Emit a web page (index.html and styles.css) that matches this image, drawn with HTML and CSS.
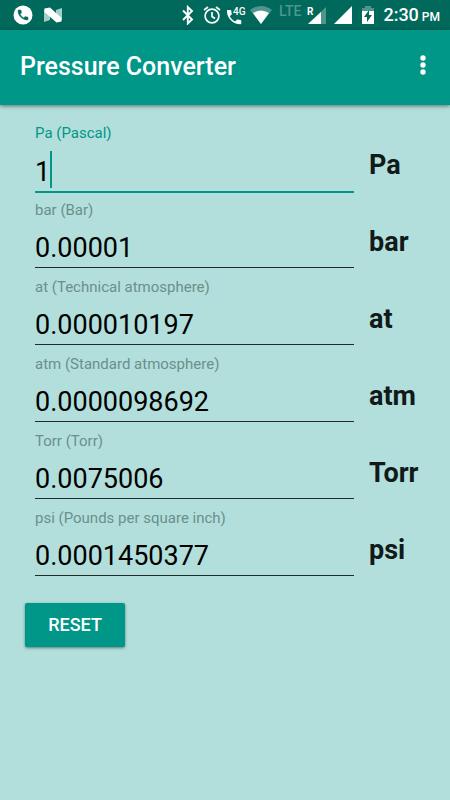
FILE: index.html
```html
<!DOCTYPE html>
<html lang="en">
<head>
<meta charset="utf-8">
<meta name="viewport" content="width=device-width, initial-scale=1">
<title>Pressure Converter</title>
<link rel="stylesheet" href="styles.css">
</head>
<body>
<div class="status">
  <div class="status-left">
    <svg width="20" height="20" viewBox="0 0 20 20" aria-hidden="true"><circle cx="10" cy="10" r="9.5" fill="#fff"/><path transform="translate(3.4 3.4) scale(.55)" fill="#00695c" d="M6.6 10.8c1.4 2.8 3.8 5.1 6.6 6.6l2.2-2.2c.3-.3.7-.4 1-.2 1.1.4 2.3.6 3.6.6.6 0 1 .4 1 1V20c0 .6-.4 1-1 1C10.6 21 3 13.4 3 4c0-.6.4-1 1-1h3.500c.6 0 1 .4 1 1 0 1.300.2 2.500.6 3.600.1.4 0 .8-.2 1z" stroke="#00695c" stroke-width="1"/></svg>
    <svg width="20" height="16" viewBox="0 0 20 16" aria-hidden="true"><path d="M1 2v13l6-2V4zM19 1v12l-6-2V3z" fill="#a3cdc8"/><path d="M1.500 1.500 7 .5 18.500 11v3.500l-5 1L1.500 5z" fill="#fff"/></svg>
  </div>
  <div class="status-right">
    <svg class="bt" width="12" height="20" viewBox="0 0 12 20" fill="none" stroke="#fff" stroke-width="1.9" aria-hidden="true"><path d="M1 5.500l9 9-4.200 4V2L10 6l-9 9"/></svg>
    <svg class="alarm" width="18" height="18" viewBox="0 0 18 18" fill="none" stroke="#fff" stroke-width="1.700" aria-hidden="true"><circle cx="9" cy="10" r="6.900"/><path d="M9 6v4.500l3 2M1 4l4-3M17 4l-4-3"/></svg>
    <svg class="call" width="20" height="20" viewBox="0 0 20 20" aria-hidden="true"><path transform="translate(-1.500 2.500) scale(.8)" fill="#fff" d="M6.600 10.800c1.400 2.800 3.800 5.100 6.600 6.600l2.200-2.200c.3-.3.7-.4 1-.2 1.100.4 2.300.6 3.600.6.6 0 1 .4 1 1V20c0 .6-.4 1-1 1C10.600 21 3 13.400 3 4c0-.6.4-1 1-1h3.500c.6 0 1 .4 1 1 0 1.300.2 2.500.6 3.600.1.4 0 .8-.2 1z"/><text class="tag" x="7" y="10">4G</text></svg>
    <svg class="wifi" width="22" height="18" viewBox="0 0 22 18" aria-hidden="true"><path d="M0 4Q11-4 22 4L11 18z" fill="#4d968d"/><path d="M3 7Q11 2 19 7l-8 11z" fill="#fff"/></svg>
    <span class="lte">LTE</span>
    <svg class="sim" width="20" height="19" viewBox="0 0 20 19" aria-hidden="true"><path d="M19 1v17H1z" fill="#4d968d"/><path d="M14 6v12H1z" fill="#fff"/><path d="M0 0h8v10H0z" fill="#00695c"/><text class="roam" x="0" y="9">R</text></svg>
    <svg class="signal" width="18" height="18" viewBox="0 0 18 18" aria-hidden="true"><path d="M18 0v18H0z" fill="#fff"/></svg>
    <svg class="battery" width="12" height="19" viewBox="0 0 12 19" aria-hidden="true"><path d="M3 0h6v2h3v5H0V2h3z" fill="#4d968d"/><path d="M0 5h12v13H0z" fill="#fff"/><path d="M7 4v5h3l-5 7v-5H2z" fill="#00695c"/></svg>
    <span class="clock">2:30</span><span class="meridiem">PM</span>
  </div>
</div>
<header class="appbar">
  <h1>Pressure Converter</h1>
  <button class="menu" type="button" aria-label="More options"><svg width="6" height="20" viewBox="0 0 6 20" fill="#fff" aria-hidden="true"><circle cx="3" cy="3" r="2.700"/><circle cx="3" cy="10" r="2.700"/><circle cx="3" cy="17" r="2.700"/></svg></button>
</header>
<form class="converter">
  <div class="rows">
    <div class="row active"><div class="field"><label for="pa">Pa (Pascal)</label><input id="pa" type="text" inputmode="decimal" value="1"><i class="caret"></i></div><span class="unit">Pa</span></div>
    <div class="row"><div class="field"><label for="bar">bar (Bar)</label><input id="bar" type="text" inputmode="decimal" value="0.00001"></div><span class="unit">bar</span></div>
    <div class="row"><div class="field"><label for="at">at (Technical atmosphere)</label><input id="at" type="text" inputmode="decimal" value="0.000010197"></div><span class="unit">at</span></div>
    <div class="row"><div class="field"><label for="atm">atm (Standard atmosphere)</label><input id="atm" type="text" inputmode="decimal" value="0.0000098692"></div><span class="unit">atm</span></div>
    <div class="row"><div class="field"><label for="torr">Torr (Torr)</label><input id="torr" type="text" inputmode="decimal" value="0.0075006"></div><span class="unit">Torr</span></div>
    <div class="row"><div class="field"><label for="psi">psi (Pounds per square inch)</label><input id="psi" type="text" inputmode="decimal" value="0.0001450377"></div><span class="unit">psi</span></div>
  </div>
  <button class="reset" type="button">RESET</button>
</form>
</body>
</html>
```
FILE: styles.css
```css
* { box-sizing: border-box; }

body {
  margin: 0;
  min-height: 100vh;
  background: #b2dfdb;
  font-family: Roboto, "Liberation Sans", sans-serif;
  color: #000;
}

svg { display: block; flex: none; }

.status {
  display: flex;
  justify-content: space-between;
  height: 30px;
  padding: 0 10px 0 13px;
  background: #00695c;
  color: #fff;
}
.status-left, .status-right { display: flex; align-items: center; }
.status-left { gap: 10px; }
.bt { margin-right: 9px; }
.alarm { margin-right: 5px; }
.call { margin-right: 4px; }
.wifi { margin-right: 7px; }
.lte {
  align-self: flex-start;
  margin-right: 6px;
  font-size: 14px;
  font-weight: 500;
  line-height: 22px;
  color: #4d968d;
}
.sim { margin-right: 7px; }
.signal { margin-right: 10px; }
.battery { margin-right: 9px; }
.status-right { align-items: center; }
.clock, .meridiem { line-height: 20px; white-space: nowrap; }
.clock { margin-right: 3px; font-size: 18px; font-weight: 500; }
.meridiem { padding-top: 4px; font-size: 12px; font-weight: 500; }
.tag, .roam { font-size: 10px; font-weight: 500; fill: #fff; }
.roam { font-weight: 700; }

.appbar {
  display: flex;
  align-items: center;
  justify-content: space-between;
  height: 75px;
  padding: 0 15px 2px 20px;
  background: #009688;
  color: #fff;
  box-shadow: 0 1px 4px rgba(0, 0, 0, 0.5);
}
.appbar h1 { margin: 0; font-size: 25px; font-weight: 500; line-height: 32px; }
.menu {
  display: flex;
  justify-content: center;
  width: 24px;
  padding: 0;
  border: 0;
  background: none;
}
.menu svg { margin-bottom: 4px; }

.converter { padding: 19px 25px 24px; }
.rows { display: grid; grid-auto-rows: 77px; padding-left: 10px; }
.row { display: grid; grid-template-columns: 1fr 56px; column-gap: 15px; }
.field { position: relative; display: flex; flex-direction: column; min-width: 0; }
.field label { font-size: 15px; line-height: 18px; color: #6b8f8b; }
.field input {
  width: 100%;
  height: 49px;
  padding: 10px 0 0;
  border: 0;
  border-bottom: 1px solid #222b2a;
  border-radius: 0;
  outline: 0;
  background: none;
  font: 27px/38px Roboto, "Liberation Sans", sans-serif;
  color: #000;
}
.active label { color: #009688; }
.active input { height: 51px; border-bottom: 2px solid #009688; }
.caret { position: absolute; left: 15px; top: 27px; width: 2px; height: 37px; background: #009688; }
.unit { padding-top: 24px; font-size: 27px; font-weight: 700; line-height: 34px; color: #111a19; }

.reset {
  display: block;
  min-width: 100px;
  height: 44px;
  margin-top: 17px;
  padding: 0 16px;
  border: 0;
  border-radius: 2px;
  background: #009688;
  box-shadow: 0 1px 3px rgba(0, 0, 0, 0.45);
  font: 500 18px/24px Roboto, "Liberation Sans", sans-serif;
  color: #fff;
}
```
